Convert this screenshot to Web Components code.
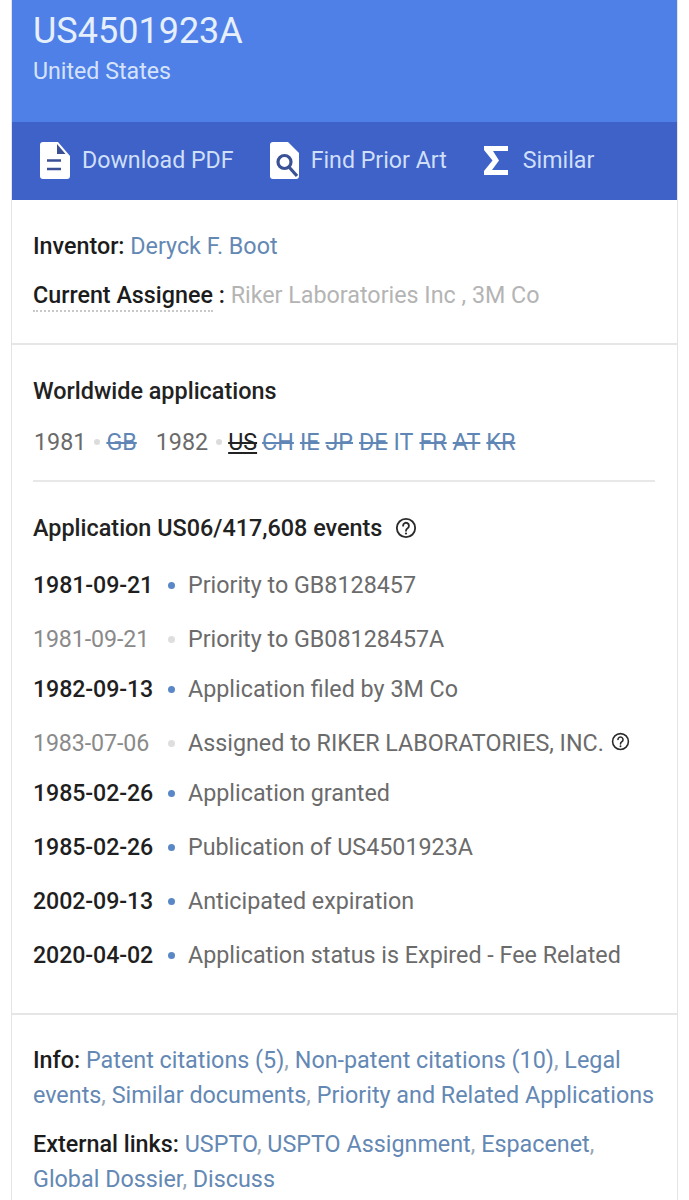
<!DOCTYPE html>
<html>
<head>
<meta charset="utf-8">
<title>US4501923A</title>
<style>
  html, body { margin: 0; padding: 0; background: #fff; }
  body { font-family: Roboto, "Liberation Sans", sans-serif; color: #212121; height: 1200px; overflow: hidden; }
</style>
</head>
<body>
<patent-card>
  <patent-header slot="header" number="US4501923A" country="United States">
    <header-action label="Download PDF" icon="pdf"></header-action>
    <header-action label="Find Prior Art" icon="search"></header-action>
    <header-action label="Similar" icon="sigma"></header-action>
  </patent-header>

  <card-section pad="31px 21px 33px">
    <info-line key="Inventor:"><link-text>Deryck F. Boot</link-text></info-line>
    <info-line dotted key="Current Assignee" value="Riker Laboratories Inc , 3M Co"></info-line>
  </card-section>

  <card-section pad="31px 21px 19px">
    <world-apps></world-apps>
    <event-list title="Application US06/417,608 events">
      <event-row date="1981-09-21" strong>Priority to GB8128457</event-row>
      <event-row date="1981-09-21" tight>Priority to GB08128457A</event-row>
      <event-row date="1982-09-13" strong>Application filed by 3M Co</event-row>
      <event-row date="1983-07-06" tight help>Assigned to RIKER LABORATORIES, INC.</event-row>
      <event-row date="1985-02-26" strong>Application granted</event-row>
      <event-row date="1985-02-26" strong>Publication of US4501923A</event-row>
      <event-row date="2002-09-13" strong>Anticipated expiration</event-row>
      <event-row date="2020-04-02" strong>Application status is Expired - Fee Related</event-row>
    </event-list>
  </card-section>

  <card-section pad="28px 21px 0" last>
    <info-para key="Info:">
      <link-text comma>Patent citations (5)</link-text>
      <link-text comma>Non-patent citations (10)</link-text>
      <link-text>Legal</link-text>
      <link-text comma>events</link-text>
      <link-text comma>Similar documents</link-text>
      <link-text>Priority and Related Applications</link-text>
    </info-para>
    <info-para key="External links:">
      <link-text comma>USPTO</link-text>
      <link-text comma>USPTO Assignment</link-text>
      <link-text comma>Espacenet</link-text>
      <link-text>Global</link-text>
      <link-text comma>Dossier</link-text>
      <link-text>Discuss</link-text>
    </info-para>
  </card-section>
</patent-card>

<script>
const HELP_ICON = size => `<svg width="${size}" height="${size}" viewBox="0 0 24 24" fill="none" stroke="#2b2b2b" stroke-width="2"><circle cx="12" cy="12" r="10"/><path d="M8.8 9.5a3.2 3.2 0 1 1 5 2.7c-1.2.8-1.8 1.4-1.8 2.8" stroke-linecap="round"/><circle cx="12" cy="18" r="1.2" fill="#2b2b2b" stroke="none"/></svg>`;

const ICONS = {
  pdf: `<svg width="30" height="37" viewBox="0 0 30 37"><path d="M3 0h15l12 14v20a3 3 0 0 1-3 3H3a3 3 0 0 1-3-3V3a3 3 0 0 1 3-3z" fill="#fff"/><path d="M17 2l8.500 10H17z" fill="#3b4f94"/><path d="M7 18.500h14M7 27h14" stroke="#3b4f94" stroke-width="2.600"/></svg>`,
  search: `<svg width="30" height="37" viewBox="0 0 30 37"><path d="M3 0h15l11 11v23a3 3 0 0 1-3 3H3a3 3 0 0 1-3-3V3a3 3 0 0 1 3-3z" fill="#fff"/><circle cx="14.500" cy="20" r="6.500" fill="none" stroke="#3a5295" stroke-width="3.200"/><path d="M19 25l8 9" stroke="#3a5295" stroke-width="3.200"/></svg>`,
  sigma: `<svg width="24" height="29" viewBox="0 0 24 29"><path d="M0 0h24v5H9l6 9.500L8 24h16v5H0v-4l8.500-10.500L0 4z" fill="#fff"/></svg>`
};

class PatentCard extends HTMLElement {
  constructor() {
    super();
    this.attachShadow({ mode: 'open' }).innerHTML = `
      <style>
        :host { display: block; margin: 0 11px; width: 667px; height: 1200px; box-sizing: border-box;
          border-left: 1px solid #e4e4e4; border-right: 1px solid #e4e4e4; overflow: hidden; background: #fff; }
      </style>
      <slot name="header"></slot>
      <slot></slot>`;
  }
}

class PatentHeader extends HTMLElement {
  constructor() {
    super();
    const root = this.attachShadow({ mode: 'open' });
    root.innerHTML = `
      <style>
        :host { display: block; margin: 0 -1px; }
        .top { background: #4f80e8; height: 122px; box-sizing: border-box; padding: 12px 22px 0; }
        .num { font-size: 36px; line-height: 38px; color: #e6effc; }
        .country { font-size: 23.200px; line-height: 26px; margin-top: 8px; color: #d5e3fa; }
        .bar { background: #3e62c8; height: 78px; box-sizing: border-box; padding: 0 0 2px 29px; display: flex; align-items: center; gap: 36px; }
      </style>
      <div class="top">
        <div class="num"></div>
        <div class="country"></div>
      </div>
      <div class="bar"><slot></slot></div>`;
    root.querySelector('.num').textContent = this.getAttribute('number');
    root.querySelector('.country').textContent = this.getAttribute('country');
  }
}

class HeaderAction extends HTMLElement {
  constructor() {
    super();
    const root = this.attachShadow({ mode: 'open' });
    root.innerHTML = `
      <style>
        :host { display: flex; align-items: center; gap: 12px; font-size: 23.200px; color: #cfdff8; }
        :host([icon="search"]) { gap: 11px; }
        :host([icon="sigma"]) { gap: 15px; margin-left: 1px; }
        svg { display: block; }
      </style>
      ${ICONS[this.getAttribute('icon')]}<span></span>`;
    root.querySelector('span').textContent = this.getAttribute('label');
  }
}

class CardSection extends HTMLElement {
  constructor() {
    super();
    this.attachShadow({ mode: 'open' }).innerHTML = `
      <style>
        :host { display: block; border-bottom: 2px solid #e6e6e6; padding: ${this.getAttribute('pad')}; }
        :host([last]) { border-bottom: 0; }
      </style>
      <slot></slot>`;
  }
}

class LinkText extends HTMLElement {
  constructor() {
    super();
    const comma = this.hasAttribute('comma') ? '<span>,</span>' : '';
    this.attachShadow({ mode: 'open' }).innerHTML = `
      <style>
        :host { display: inline; color: #6488b4; }
        span { color: #9aa6b4; }
      </style><slot></slot>${comma}`;
  }
}

class InfoLine extends HTMLElement {
  constructor() {
    super();
    const root = this.attachShadow({ mode: 'open' });
    root.innerHTML = `
      <style>
        :host { display: block; font-size: 23.300px; line-height: 30px; }
        :host(:not(:last-child)) { margin-bottom: 19px; }
        b { font-weight: 500; color: #1c1c1c; }
        :host([dotted]) b { border-bottom: 2px dotted #c8c8c8; padding-bottom: 1px; }
        .value { color: #b4b4b4; }
      </style>
      <b></b><span class="colon"></span> <span class="value"></span><slot></slot>`;
    root.querySelector('b').textContent = this.getAttribute('key');
    const value = this.getAttribute('value');
    if (value) {
      root.querySelector('.colon').textContent = ' :';
      root.querySelector('.colon').style.fontWeight = 500;
      root.querySelector('.value').textContent = value;
    }
  }
}

class WorldApps extends HTMLElement {
  constructor() {
    super();
    const countries = ['CH', 'IE', 'JP', 'DE', 'IT', 'FR', 'AT', 'KR'];
    this.attachShadow({ mode: 'open' }).innerHTML = `
      <style>
        :host { display: block; font-size: 23.300px; }
        h3 { margin: 0 0 21px; font-size: 23.400px; line-height: 30px; font-weight: 500; color: #222; }
        .row { display: flex; align-items: center; height: 30px; color: #6a6a6a; padding-left: 1px; }
        .dot { width: 6px; height: 6px; border-radius: 50%; background: #dcdcdc; margin: 0 6px 0 8px; }
        .c { color: #5f86b5; text-decoration: line-through; margin-right: 6px; }
        .c.live { text-decoration: none; }
        .us { color: #222; text-decoration: underline line-through; margin-right: 5px; }
        .year2 { margin-left: 13px; }
        hr { border: 0; border-top: 2px solid #e8e8e8; margin: 23px 1px 0 0; }
      </style>
      <h3>Worldwide applications</h3>
      <div class="row">
        <span>1981</span><span class="dot"></span><span class="c">GB</span>
        <span class="year2">1982</span><span class="dot"></span><span class="us">US</span>
        ${countries.map(c => `<span class="c ${c === 'IT' ? 'live' : ''}">${c}</span>`).join('')}
      </div>
      <hr>`;
  }
}

class EventList extends HTMLElement {
  constructor() {
    super();
    const root = this.attachShadow({ mode: 'open' });
    root.innerHTML = `
      <style>
        :host { display: block; margin-top: 31px; }
        h3 { margin: 0 0 27px; display: flex; align-items: center; gap: 13px; font-size: 23.400px; line-height: 30px; font-weight: 500; color: #222; }
      </style>
      <h3><span></span>${HELP_ICON(22)}</h3>
      <slot></slot>`;
    root.querySelector('span').textContent = this.getAttribute('title');
  }
}

class EventRow extends HTMLElement {
  constructor() {
    super();
    const root = this.attachShadow({ mode: 'open' });
    root.innerHTML = `
      <style>
        :host { display: flex; align-items: center; height: 30px; margin-bottom: 24px; font-size: 23.300px; color: #6b6b6b; }
        :host([tight]) { margin-bottom: 20px; }
        .date { width: 135px; color: #8a8a8a; flex: none; letter-spacing: -0.100px; font-size: 23.200px; }
        :host([strong]) .date { color: #1f1f1f; font-weight: 500; }
        .dot { width: 7px; height: 7px; border-radius: 50%; background: #dedede; margin-right: 13px; flex: none; }
        :host([strong]) .dot { background: #5a88c6; }
        svg { margin-left: 7px; position: relative; top: -2px; }
      </style>
      <span class="date"></span><span class="dot"></span><slot></slot>${this.hasAttribute('help') ? HELP_ICON(19) : ''}`;
    root.querySelector('.date').textContent = this.getAttribute('date');
  }
}

class InfoPara extends HTMLElement {
  constructor() {
    super();
    const root = this.attachShadow({ mode: 'open' });
    root.innerHTML = `
      <style>
        :host { display: block; font-size: 23.340px; line-height: 35px; margin-bottom: 14px; }
        b { font-weight: 500; color: #1c1c1c; }
      </style>
      <b></b> <slot></slot>`;
    root.querySelector('b').textContent = this.getAttribute('key');
  }
}

customElements.define('patent-card', PatentCard);
customElements.define('patent-header', PatentHeader);
customElements.define('header-action', HeaderAction);
customElements.define('card-section', CardSection);
customElements.define('link-text', LinkText);
customElements.define('info-line', InfoLine);
customElements.define('world-apps', WorldApps);
customElements.define('event-list', EventList);
customElements.define('event-row', EventRow);
customElements.define('info-para', InfoPara);
</script>
</body>
</html>
